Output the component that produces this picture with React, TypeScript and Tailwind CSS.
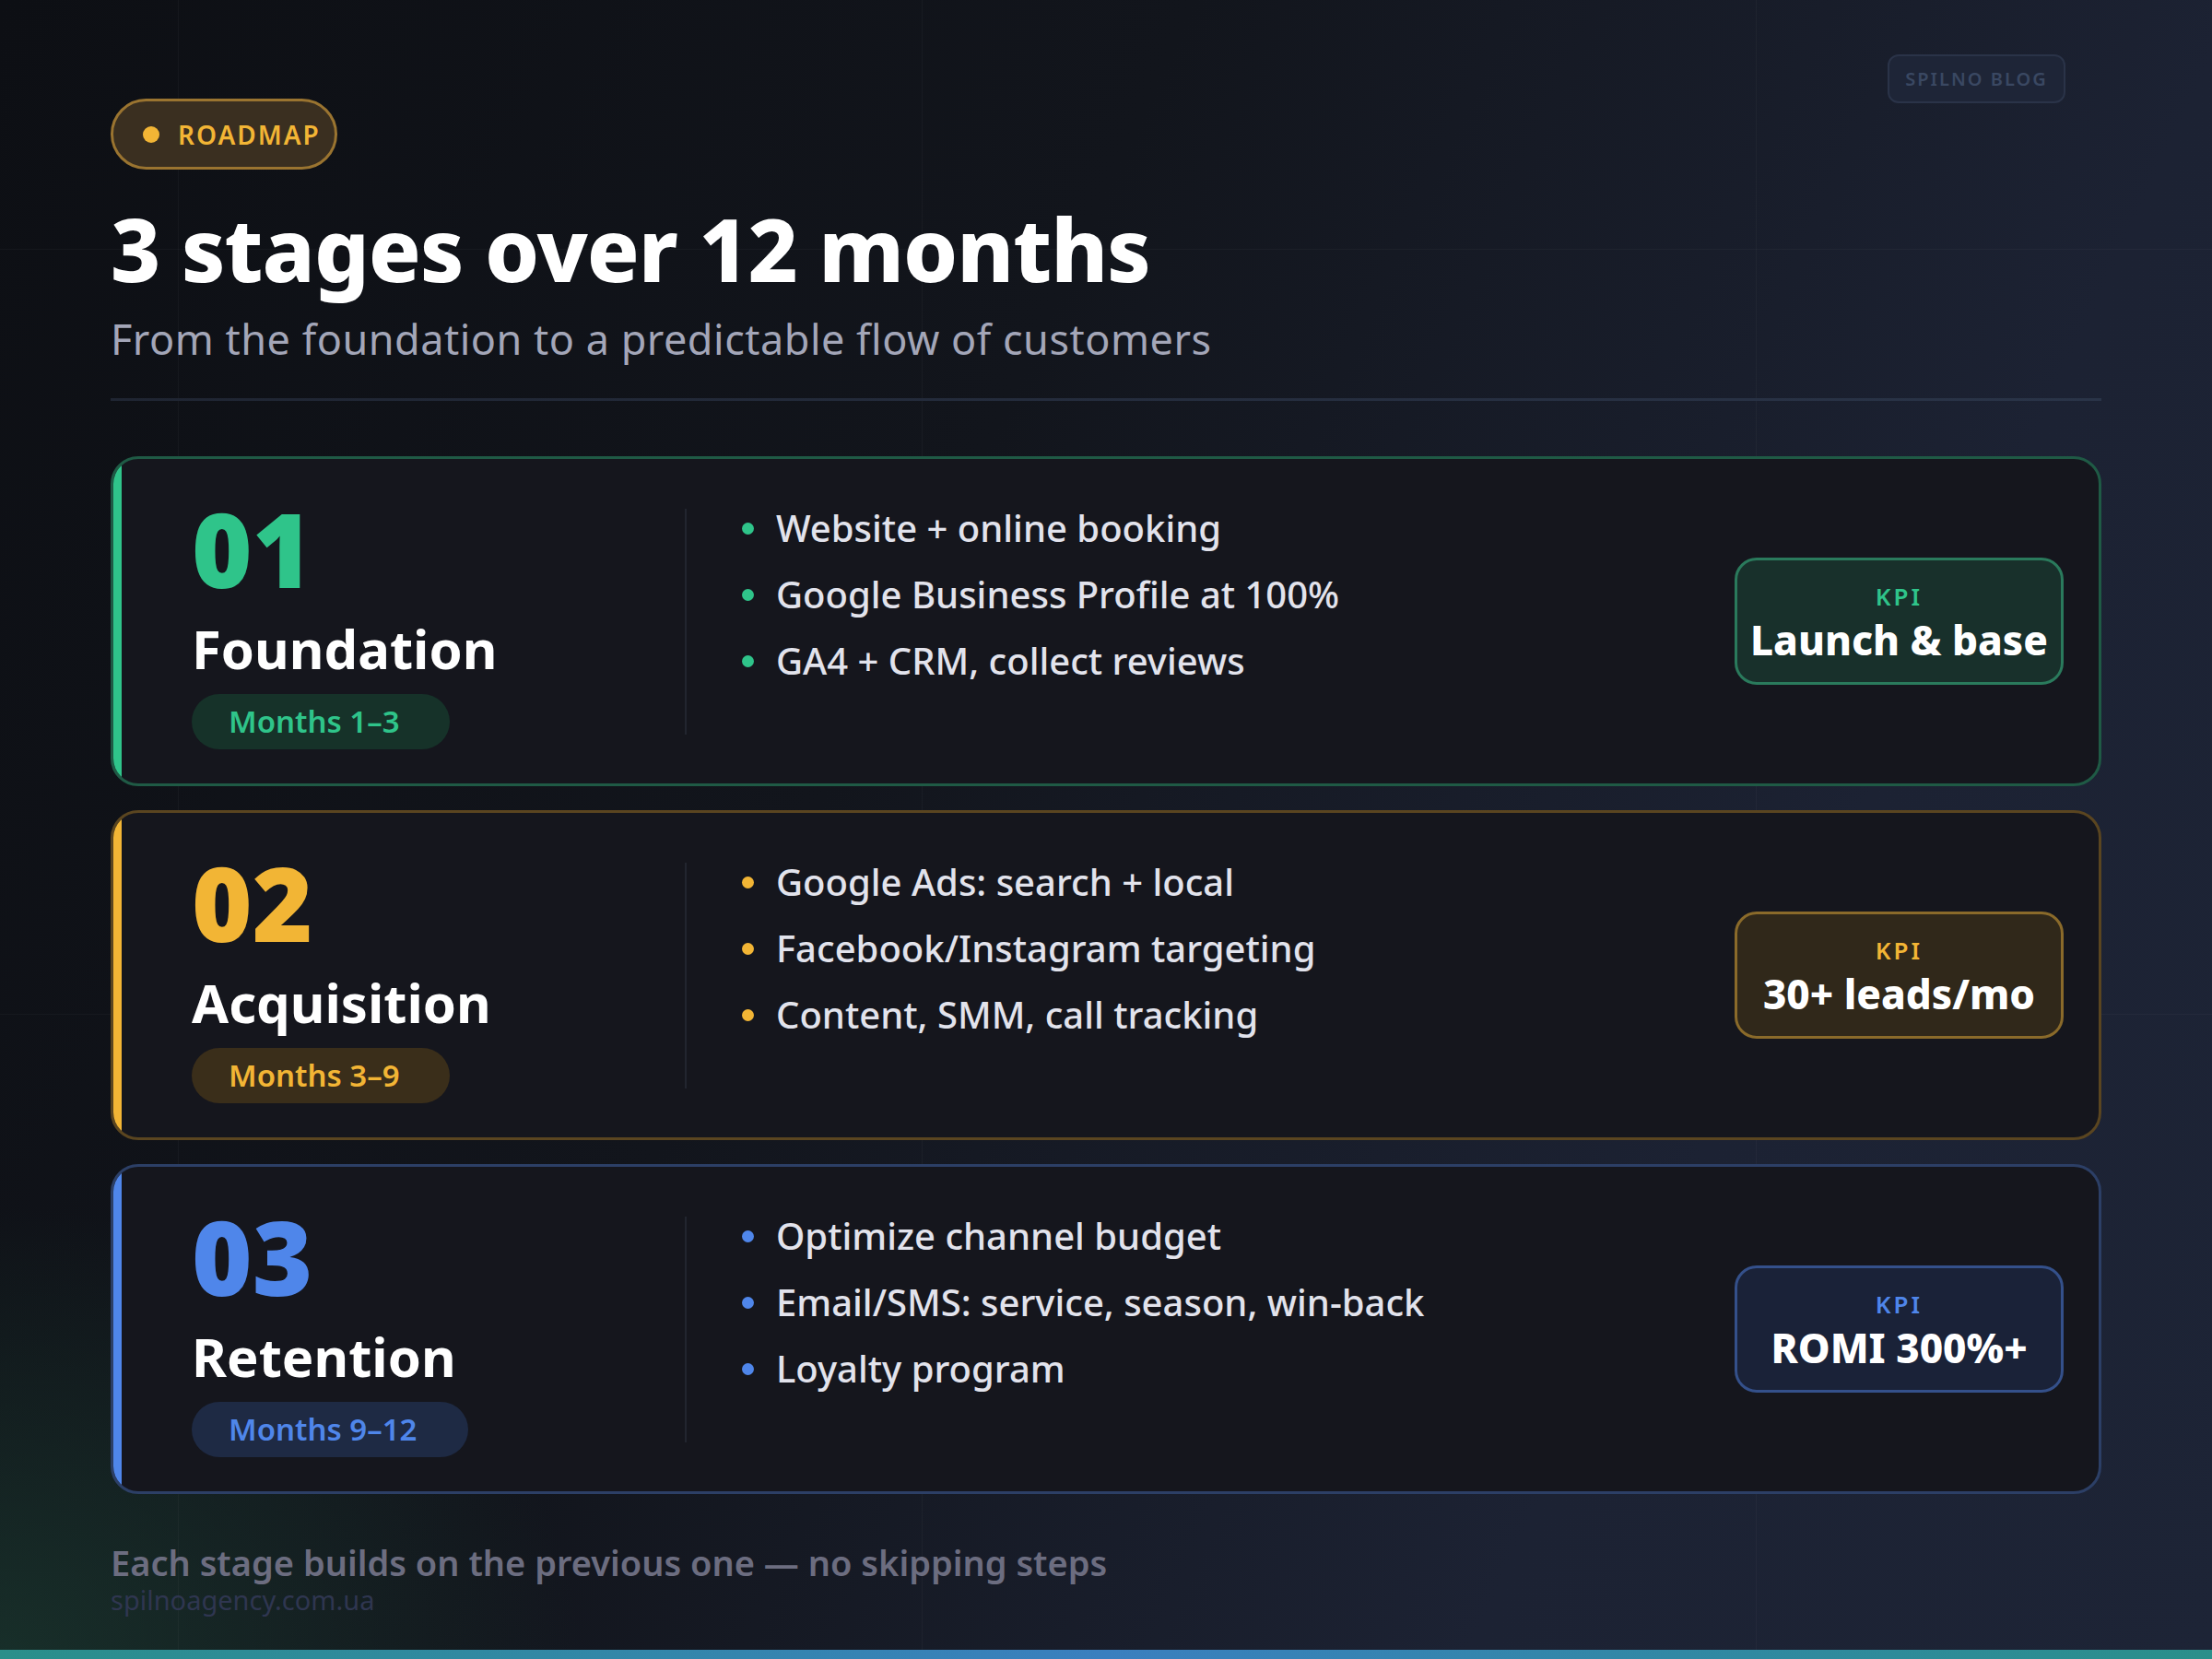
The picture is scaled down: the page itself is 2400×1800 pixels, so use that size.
const stages = [
  {
    n: "01", title: "Foundation", months: "Months 1–3", kpi: "Launch & base",
    items: ["Website + online booking", "Google Business Profile at 100%", "GA4 + CRM, collect reviews"],
    num: "text-[#2fc48a]", bar: "bg-[#2fc48a]", border: "border-[#1f5a45]", dot: "bg-[#2fc48a]",
    pill: "bg-[#163229] text-[#2fc48a] w-[280px]", kbox: "bg-[#18302b] border-[#2a7a5c]", klabel: "text-[#2fc48a]",
  },
  {
    n: "02", title: "Acquisition", months: "Months 3–9", kpi: "30+ leads/mo",
    items: ["Google Ads: search + local", "Facebook/Instagram targeting", "Content, SMM, call tracking"],
    num: "text-[#f2b535]", bar: "bg-[#f2b535]", border: "border-[#5a4520]", dot: "bg-[#f2b535]",
    pill: "bg-[#3a2e1a] text-[#f2b535] w-[280px]", kbox: "bg-[#30281a] border-[#8a6a2a]", klabel: "text-[#f2b535]",
  },
  {
    n: "03", title: "Retention", months: "Months 9–12", kpi: "ROMI 300%+",
    items: ["Optimize channel budget", "Email/SMS: service, season, win-back", "Loyalty program"],
    num: "text-[#4f86ea]", bar: "bg-[#4f86ea]", border: "border-[#2c3f66]", dot: "bg-[#4f86ea]",
    pill: "bg-[#1e2a44] text-[#4f86ea] w-[300px]", kbox: "bg-[#1a2238] border-[#34508a]", klabel: "text-[#4f86ea]",
  },
];

export default function App() {
  return (
    <div
      className="relative w-[2400px] h-[1800px] overflow-hidden text-white"
      style={{
        fontFamily: "'Noto Sans', 'Open Sans', sans-serif",
        background:
          "radial-gradient(ellipse 900px 700px at 0% 100%, rgba(30,70,55,0.55), transparent 70%), linear-gradient(115deg, #0d0f14 0%, #12151c 40%, #1c2233 75%, #1d2436 100%)",
      }}
    >
      <div className="absolute inset-0 pointer-events-none">
        <div className="absolute left-0 right-0 top-[270px] h-px bg-white/[0.03]" />
        <div className="absolute left-0 right-0 top-[1100px] h-px bg-white/[0.03]" />
        <div className="absolute top-0 bottom-0 left-[193px] w-px bg-white/[0.03]" />
        <div className="absolute top-0 bottom-0 left-[1000px] w-px bg-white/[0.03]" />
        <div className="absolute top-0 bottom-0 left-[1905px] w-px bg-white/[0.03]" />
      </div>

      <div className="absolute right-[159px] top-[59px] h-[53px] w-[193px] rounded-[12px] border-2 border-[#2a3348] bg-[#1e2537] flex items-center justify-center text-[20px] font-semibold tracking-[2px] text-[#3a4862]">
        SPILNO BLOG
      </div>

      <div className="relative flex flex-col px-[120px] pt-[107px]">
        <div className="flex items-center gap-[20px] h-[77px] w-[246px] rounded-full border-[3px] border-[#9a7430] bg-[#3a2f20] pl-[32px]">
          <span className="w-[18px] h-[18px] rounded-full bg-[#f2b535]" />
          <span className="text-[28px] font-semibold tracking-[2px] text-[#f2b535]">ROADMAP</span>
        </div>
        <h1 className="mt-[26px] text-[94px] leading-[120px] font-extrabold tracking-[-1px]">3 stages over 12 months</h1>
        <p className="mt-[10px] text-[45px] leading-[56px] tracking-[0.5px] text-[#a3a6b8]">From the foundation to a predictable flow of customers</p>
        <div className="mt-[36px] h-[3px] bg-gradient-to-r from-[#1f2532] to-[#2a3448]" />

        <div className="mt-[60px] flex flex-col gap-[26px]">
          {stages.map((s) => (
            <div key={s.n} className={`relative h-[358px] rounded-[30px] border-[3px] ${s.border} bg-[#15161d] flex items-center overflow-hidden`}>
              <div className={`absolute left-0 top-0 bottom-0 w-[9px] ${s.bar}`} />
              <div className="w-[620px] pl-[85px] flex flex-col pt-[10px]">
                <div className={`text-[112px] leading-[100px] font-black ${s.num}`}>{s.n}</div>
                <div className="mt-[24px] text-[58px] leading-[70px] font-bold">{s.title}</div>
                <div className={`mt-[14px] h-[60px] rounded-full flex items-center pl-[40px] text-[33px] font-semibold ${s.pill}`}>{s.months}</div>
              </div>
              <div className="w-[2px] h-[245px] bg-[#22252f] mr-[60px]" />
              <div className="flex-1 flex flex-col gap-[22px] self-start pt-[50px]">
                {s.items.map((it) => (
                  <div key={it} className="flex items-center gap-[24px] h-[50px]">
                    <span className={`w-[13px] h-[13px] rounded-full ${s.dot}`} />
                    <span className="text-[40px] text-[#e2e3ec] font-medium">{it}</span>
                  </div>
                ))}
              </div>
              <div className={`mr-[38px] w-[357px] h-[138px] rounded-[24px] border-[3px] ${s.kbox} flex flex-col items-center justify-center`}>
                <div className={`text-[26px] font-semibold tracking-[3px] ${s.klabel}`}>KPI</div>
                <div className="text-[44px] leading-[54px] font-extrabold">{s.kpi}</div>
              </div>
            </div>
          ))}
        </div>

        <div className="mt-[52px] text-[38px] leading-[44px] font-semibold text-[#6c6d80]">Each stage builds on the previous one — no skipping steps</div>
        <div className="mt-[2px] text-[29px] leading-[34px] text-[#2f3650]">spilnoagency.com.ua</div>
      </div>

      <div className="absolute left-0 right-0 bottom-0 h-[10px] bg-gradient-to-r from-[#2a8f8a] via-[#3a7fbf] to-[#2a8f8a]" />
    </div>
  );
}
